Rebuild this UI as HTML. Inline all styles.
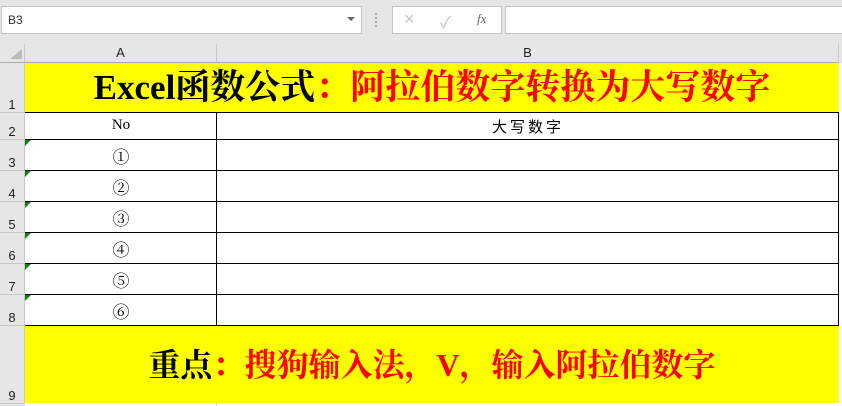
<!DOCTYPE html>
<html><head><meta charset="utf-8"><style>
*{margin:0;padding:0;box-sizing:border-box}
body{width:842px;height:406px;background:#e6e6e6;position:relative;overflow:hidden;font-family:"Liberation Sans","Noto Sans CJK SC",sans-serif}
.a{position:absolute}
.rh{position:absolute;left:0;width:25px;background:#e6e6e6;border-bottom:1px solid #c8c8c8;border-right:1px solid #c8c8c8;font-size:13px;color:#222;text-align:center;display:flex;align-items:flex-end;justify-content:center;padding-bottom:0}
.cell{position:absolute;background:#fff;border-bottom:1px solid #000;border-right:1px solid #000}
.tri{position:absolute;left:0;top:0;width:0;height:0;border-top:6px solid #1e7a1e;border-right:6px solid transparent}
.num{position:absolute;left:25px;width:192px;text-align:center;font-family:"Liberation Serif","Noto Serif CJK SC",serif;font-size:17px}
.serif{font-family:"Liberation Serif","Noto Serif CJK SC",serif;font-weight:bold}
</style></head><body>
<div class="a" style="left:1px;top:6px;width:361px;height:28px;background:#fff;border:1px solid #c6c6c6"></div>
<div class="a" style="left:8px;top:13px;font-size:12px;color:#333">B3</div>
<div class="a" style="left:347px;top:17px;border-left:4px solid transparent;border-right:4px solid transparent;border-top:4px solid #666"></div>
<div class="a" style="left:375px;top:13px;width:2px;height:14px;border-left:2px dotted #aaa"></div>
<div class="a" style="left:392px;top:6px;width:110px;height:28px;background:#fff;border:1px solid #c6c6c6"></div>
<div class="a" style="left:404px;top:9px;font-size:18px;color:#c4c4c4">×</div>
<div class="a" style="left:440px;top:9px;font-size:16px;color:#c4c4c4">✓</div>
<div class="a" style="left:477px;top:11px;font-size:13px;color:#666;font-style:italic;font-family:'Liberation Serif',serif">fx</div>
<div class="a" style="left:505px;top:6px;width:340px;height:28px;background:#fff;border:1px solid #c6c6c6"></div>
<div class="a" style="left:0;top:44px;width:25px;height:19px;border-right:1px solid #c8c8c8;border-bottom:1px solid #aaa"></div>
<div class="a" style="left:10px;top:49px;border-left:12px solid transparent;border-bottom:10px solid #bbb"></div>
<div class="a" style="left:25px;top:44px;width:192px;height:19px;border-right:1px solid #c8c8c8;border-bottom:1px solid #aaa;text-align:center;font-size:13px;line-height:18px;color:#222">A</div>
<div class="a" style="left:217px;top:44px;width:622px;height:19px;border-right:1px solid #c8c8c8;border-bottom:1px solid #aaa;text-align:center;font-size:13px;line-height:18px;color:#222">B</div>
<div class="rh" style="top:63px;height:50px">1</div>
<div class="a" style="left:25px;top:63px;width:814px;height:49px;background:#ff0"></div>
<div class="a serif" style="left:0;top:63px;width:864px;height:49px;text-align:center;font-size:35px;line-height:50px;white-space:nowrap"><span>Excel函数公式</span><span style="color:#f00">：阿拉伯数字转换为大写数字</span></div>
<div class="rh" style="top:113px;height:27px">2</div>
<div class="cell" style="left:25px;top:112px;width:192px;height:28px;border-top:1px solid #000"></div>
<div class="cell" style="left:217px;top:112px;width:622px;height:28px;border-top:1px solid #000"></div>
<div class="num" style="top:117px;font-size:15px">No</div>
<div class="a" style="left:217px;top:117px;width:622px;text-align:center;font-size:15px;letter-spacing:3px;font-family:'Noto Sans CJK SC',sans-serif;line-height:20px">大写数字</div>
<div class="rh" style="top:140px;height:31px">3</div>
<div class="rh" style="top:171px;height:31px">4</div>
<div class="rh" style="top:202px;height:31px">5</div>
<div class="rh" style="top:233px;height:31px">6</div>
<div class="rh" style="top:264px;height:31px">7</div>
<div class="rh" style="top:295px;height:31px">8</div>
<div class="cell" style="left:25px;top:140px;width:192px;height:31px"><div class="tri"></div></div><div class="cell" style="left:217px;top:140px;width:622px;height:31px"></div>
<div class="cell" style="left:25px;top:171px;width:192px;height:31px"><div class="tri"></div></div><div class="cell" style="left:217px;top:171px;width:622px;height:31px"></div>
<div class="cell" style="left:25px;top:202px;width:192px;height:31px"><div class="tri"></div></div><div class="cell" style="left:217px;top:202px;width:622px;height:31px"></div>
<div class="cell" style="left:25px;top:233px;width:192px;height:31px"><div class="tri"></div></div><div class="cell" style="left:217px;top:233px;width:622px;height:31px"></div>
<div class="cell" style="left:25px;top:264px;width:192px;height:31px"><div class="tri"></div></div><div class="cell" style="left:217px;top:264px;width:622px;height:31px"></div>
<div class="cell" style="left:25px;top:295px;width:192px;height:31px"><div class="tri"></div></div><div class="cell" style="left:217px;top:295px;width:622px;height:31px"></div>
<div class="num" style="top:143px">①</div>
<div class="num" style="top:174px">②</div>
<div class="num" style="top:205px">③</div>
<div class="num" style="top:236px">④</div>
<div class="num" style="top:267px">⑤</div>
<div class="num" style="top:298px">⑥</div>
<div class="rh" style="top:326px;height:78px">9</div>
<div class="a" style="left:25px;top:326px;width:814px;height:77px;background:#ff0"></div>
<div class="a serif" style="left:0;top:344px;width:864px;text-align:center;font-size:32px;line-height:42px;white-space:nowrap"><span>重点</span><span style="color:#f00">：搜狗输入法，V，输入阿拉伯数字</span></div>
<div class="a" style="left:25px;top:403px;width:817px;height:3px;background:#fff"></div>
<div class="a" style="left:216px;top:403px;width:1px;height:3px;background:#d4d4d4"></div>
<div class="a" style="left:839px;top:63px;width:3px;height:343px;background:#fff"></div>
</body></html>
